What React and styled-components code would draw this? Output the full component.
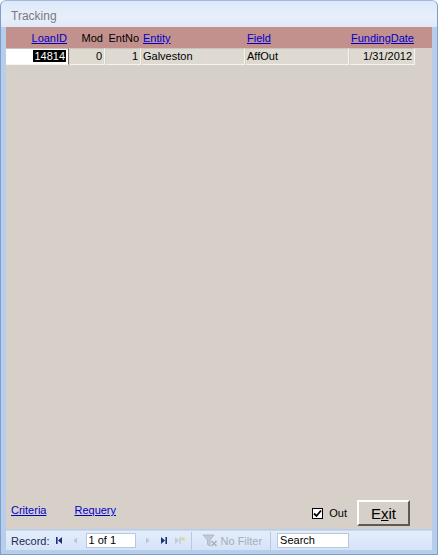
import React from 'react';
import styled, { createGlobalStyle } from 'styled-components';

const GlobalStyle = createGlobalStyle`
	body {
		margin: 0;
		background: #ffffff;
		font-family: 'Liberation Sans', Arial, sans-serif;
	}
`;

const columns = [
	{ key: 'loan', title: 'LoanID', width: 63, align: 'right', link: true },
	{ key: 'mod', title: 'Mod', width: 35, align: 'right' },
	{ key: 'ent', title: 'EntNo', width: 35, align: 'right' },
	{ key: 'entity', title: 'Entity', width: 103, align: 'left', link: true },
	{ key: 'field', title: 'Field', width: 103, align: 'left', link: true },
	{ key: 'date', title: 'FundingDate', width: 65, align: 'right', link: true }
];

const rows = [
	{ loan: '14814', mod: '0', ent: '1', entity: 'Galveston', field: 'AffOut', date: '1/31/2012' }
];

const gridTemplate = columns.map(c => c.width + 'px').join(' ');

function First() {
	return (
		<svg width="9" height="9" viewBox="0 0 9 9">
			<rect x="1" y="1" width="1.6" height="7" fill="#1b2f7a" />
			<path d="M7 1 L3 4.5 L7 8 Z" fill="#1b2f7a" />
		</svg>
	);
}

function Prev() {
	return (
		<svg width="9" height="9" viewBox="0 0 9 9">
			<path d="M6 1.5 L2.5 4.5 L6 7.5 Z" fill="#b9c4d6" />
		</svg>
	);
}

function Next() {
	return (
		<svg width="9" height="9" viewBox="0 0 9 9">
			<path d="M3 1.5 L6.5 4.5 L3 7.5 Z" fill="#b9c4d6" />
		</svg>
	);
}

function Last() {
	return (
		<svg width="9" height="9" viewBox="0 0 9 9">
			<path d="M2 1 L6 4.5 L2 8 Z" fill="#1b2f7a" />
			<rect x="6.4" y="1" width="1.6" height="7" fill="#1b2f7a" />
		</svg>
	);
}

function NewRec() {
	return (
		<svg width="12" height="9" viewBox="0 0 12 9">
			<path d="M1 1 L5 4.5 L1 8 Z" fill="#c3cbda" />
			<rect x="5.4" y="1" width="1.4" height="7" fill="#c3cbda" />
			<path d="M9 1 L9 5 M7 3 L11 3 M7.6 1.6 L10.4 4.4 M10.4 1.6 L7.6 4.4" stroke="#e8d28a" strokeWidth="1" />
		</svg>
	);
}

function FilterIcon() {
	return (
		<svg width="16" height="14" viewBox="0 0 16 14">
			<path d="M1 1 L12 1 L8 6 L8 12 L5.5 10.5 L5.5 6 Z" fill="#c4cad4" stroke="#a9b0bb" strokeWidth="0.8" />
			<path d="M9.5 7 L14.5 12 M14.5 7 L9.5 12" stroke="#a9b0bb" strokeWidth="1.6" />
		</svg>
	);
}

export default function App() {
	return (
		<Window>
			<GlobalStyle />
			<TitleBar>Tracking</TitleBar>
			<Body>
				<HeaderBand>
					<Grid>
						{columns.map(c => (
							<HeadCell key={c.key} align={c.align} link={c.link}>
								{c.title}
							</HeadCell>
						))}
					</Grid>
				</HeaderBand>
				{rows.map(r => (
					<Grid key={r.loan}>
						{columns.map(c => (
							<Cell key={c.key} align={c.align} white={c.key === 'loan'}>
								{c.key === 'loan' ? <Selected>{r[c.key]}</Selected> : r[c.key]}
							</Cell>
						))}
					</Grid>
				))}
				<Spacer />
				<Footer>
					<FootLink>Criteria</FootLink>
					<FootLink>Requery</FootLink>
					<FootRight>
						<CheckLabel>
							<CheckBox>
								<svg width="9" height="9" viewBox="0 0 9 9">
									<path d="M1 4.5 L3.5 7 L8 1.5" stroke="#000" strokeWidth="1.8" fill="none" />
								</svg>
							</CheckBox>
							Out
						</CheckLabel>
						<ExitButton>
							E<u>x</u>it
						</ExitButton>
					</FootRight>
				</Footer>
			</Body>
			<NavBar>
				<NavLabel>Record:</NavLabel>
				<NavIcon><First /></NavIcon>
				<NavIcon><Prev /></NavIcon>
				<RecordBox>1 of 1</RecordBox>
				<NavIcon><Next /></NavIcon>
				<NavIcon><Last /></NavIcon>
				<NavIcon><NewRec /></NavIcon>
				<Separator />
				<FilterArea>
					<FilterIcon />
					No Filter
				</FilterArea>
				<Separator />
				<SearchBox>Search</SearchBox>
			</NavBar>
		</Window>
	);
}

const Window = styled.div`
	width: 438px;
	height: 555px;
	box-sizing: border-box;
	display: flex;
	flex-direction: column;
	background: #b7cdec;
	border: 1px solid #7f9dc9;
	border-top-color: #9fb8dd;
	border-radius: 6px 6px 0 0;
	overflow: hidden;
	padding: 0 5px 4px 5px;
`;

const TitleBar = styled.div`
	height: 26px;
	flex: none;
	box-sizing: border-box;
	margin: 0 -5px;
	padding: 8px 0 0 10px;
	background: linear-gradient(#dde8f8, #e8effb 60%, #dfe9f8);
	color: #7a7a7a;
	font-family: 'Liberation Sans', Arial, sans-serif;
	font-size: 12px;
`;

const Body = styled.div`
	flex: 1;
	display: flex;
	flex-direction: column;
	background: #d7d0c9;
	font-size: 11px;
	color: #000;
`;

const HeaderBand = styled.div`
	height: 21px;
	background: #c2918d;
	display: flex;
	align-items: flex-end;
	padding-bottom: 4px;
	box-sizing: border-box;
`;

const Grid = styled.div`
	display: grid;
	grid-template-columns: ${gridTemplate};
	column-gap: 1px;
`;

const HeadCell = styled.div`
	text-align: ${p => p.align};
	padding: 0 2px 0 1px;
	color: ${p => (p.link ? '#0000cc' : '#000')};
	text-decoration: ${p => (p.link ? 'underline' : 'none')};
	white-space: nowrap;
`;

const Cell = styled.div`
	height: 17px;
	box-sizing: border-box;
	line-height: 15px;
	padding: 0 2px 0 1px;
	text-align: ${p => p.align};
	background: ${p => (p.white ? '#ffffff' : '#dedad2')};
	border-right: 1px solid ${p => (p.white ? '#6f6f6f' : '#f6f4f0')};
	border-bottom: 1px solid #f6f4f0;
	border-top: 1px solid #c8c4bc;
	white-space: nowrap;
`;

const Selected = styled.span`
	background: #000;
	color: #fff;
	padding: 0 1px;
`;

const Spacer = styled.div`
	flex: 1;
`;

const Footer = styled.div`
	display: flex;
	align-items: center;
	gap: 28px;
	padding: 0 22px 3px 5px;
`;

const FootLink = styled.span`
	color: #0000cc;
	text-decoration: underline;
	margin-bottom: 6px;
`;

const FootRight = styled.div`
	margin-left: auto;
	display: flex;
	align-items: center;
	gap: 10px;
`;

const CheckLabel = styled.label`
	display: flex;
	align-items: center;
	gap: 6px;
	font-size: 11px;
`;

const CheckBox = styled.span`
	width: 11px;
	height: 11px;
	box-sizing: border-box;
	border: 1px solid #000;
	background: #fff;
	display: flex;
	align-items: center;
	justify-content: center;
`;

const ExitButton = styled.button`
	width: 53px;
	height: 26px;
	box-sizing: border-box;
	background: #d7d0c9;
	border: 2px solid;
	border-color: #ffffff #5a5a5a #5a5a5a #ffffff;
	font-family: 'Liberation Sans', Arial, sans-serif;
	font-size: 15px;
	color: #000;
	padding: 0;
`;

const NavBar = styled.div`
	height: 20px;
	flex: none;
	box-sizing: border-box;
	display: flex;
	align-items: center;
	background: linear-gradient(#e3edfb, #d6e4f8);
	border-top: 1px solid #c9d8ee;
	font-size: 11px;
	color: #1e2a55;
	padding-left: 5px;
	margin-top: 1px;
`;

const NavLabel = styled.span`
	margin-right: 2px;
`;

const NavIcon = styled.span`
	width: 16px;
	display: flex;
	align-items: center;
	justify-content: center;
`;

const RecordBox = styled.span`
	width: 50px;
	height: 15px;
	box-sizing: border-box;
	border: 1px solid #b6c7e0;
	background: #fff;
	color: #000;
	line-height: 13px;
	padding-left: 2px;
	margin: 0 4px 0 2px;
`;

const Separator = styled.span`
	width: 1px;
	height: 18px;
	background: #b9c8dd;
	margin: 0 6px 0 3px;
`;

const FilterArea = styled.span`
	display: flex;
	align-items: center;
	gap: 3px;
	color: #a7adb8;
	margin-right: 5px;
	padding-left: 4px;
`;

const SearchBox = styled.span`
	width: 72px;
	height: 15px;
	box-sizing: border-box;
	border: 1px solid #b6c7e0;
	background: #fff;
	color: #000;
	line-height: 13px;
	padding-left: 2px;
`;
